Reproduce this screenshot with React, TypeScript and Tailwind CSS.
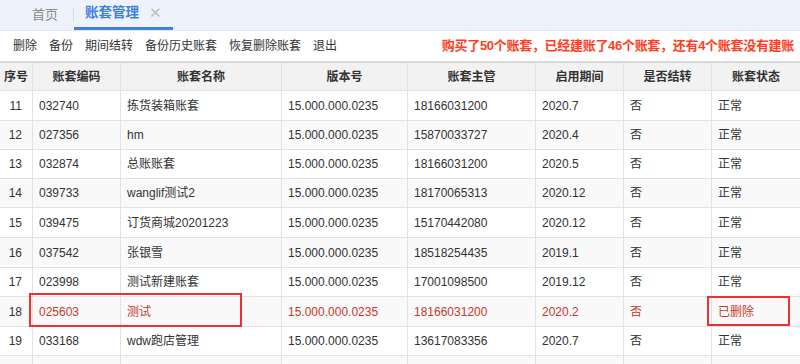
import React from 'react'

const rows = [
  { no: 11, code: '032740', name: '拣货装箱账套', ver: '15.000.000.0235', boss: '18166031200', period: '2020.7', carry: '否', status: '正常', h: 'h-[30px]' },
  { no: 12, code: '027356', name: 'hm', ver: '15.000.000.0235', boss: '15870033727', period: '2020.4', carry: '否', status: '正常', h: 'h-[29px]' },
  { no: 13, code: '032874', name: '总账账套', ver: '15.000.000.0235', boss: '18166031200', period: '2020.5', carry: '否', status: '正常', h: 'h-[29px]' },
  { no: 14, code: '039733', name: 'wanglif测试2', ver: '15.000.000.0235', boss: '18170065313', period: '2020.12', carry: '否', status: '正常', h: 'h-[29px]' },
  { no: 15, code: '039475', name: '订货商城20201223', ver: '15.000.000.0235', boss: '15170442080', period: '2020.12', carry: '否', status: '正常', h: 'h-[30px]' },
  { no: 16, code: '037542', name: '张银雪', ver: '15.000.000.0235', boss: '18518254435', period: '2019.1', carry: '否', status: '正常', h: 'h-[30px]' },
  { no: 17, code: '023998', name: '测试新建账套', ver: '15.000.000.0235', boss: '17001098500', period: '2019.12', carry: '否', status: '正常', h: 'h-[29px]' },
  { no: 18, code: '025603', name: '测试', ver: '15.000.000.0235', boss: '18166031200', period: '2020.2', carry: '否', status: '已删除', h: 'h-[30px]', deleted: true },
  { no: 19, code: '033168', name: 'wdw跑店管理', ver: '15.000.000.0235', boss: '13617083356', period: '2020.7', carry: '否', status: '正常', h: 'h-[29px]' },
]

const headers = ['序号', '账套编码', '账套名称', '版本号', '账套主管', '启用期间', '是否结转', '账套状态']
const cols = 'grid grid-cols-[33px_88px_161px_126px_128px_88px_88px_88px]'

const App = () => {
  return (
    <div className="w-[800px] h-[364px] overflow-hidden bg-white text-[#333] font-['Liberation_Sans','Noto_Sans_CJK_SC',sans-serif]">
      {/* tab bar */}
      <div className="h-[31px] bg-[#eef3fb] border-b border-[#e3e9f3] flex items-end">
        <div className="w-[73px] h-[30px] flex items-center justify-end pr-[15px] text-[13px] text-[#8a8a8a]">首页</div>
        <div className="w-px h-[14px] bg-[#d6dbe4] mb-[8px]"></div>
        <div className="w-[99px] h-[30px] flex items-center pl-[11px] gap-[10px] border-b-[3px] border-[#3f7fe3] text-[13.5px] font-bold text-[#3f7fe3]">
          <span>账套管理</span>
          <span className="text-[#b8bcc4] font-normal text-[15px]">✕</span>
        </div>
      </div>

      {/* toolbar */}
      <div className="h-[30px] flex items-center justify-between pl-[13px] pr-[6px] text-[12px]">
        <div className="flex gap-[12px]">
          <span>删除</span>
          <span>备份</span>
          <span>期间结转</span>
          <span>备份历史账套</span>
          <span>恢复删除账套</span>
          <span>退出</span>
        </div>
        <div className="text-[13px] font-bold text-[#ff3d1f] tracking-[-0.3px]">购买了50个账套，已经建账了46个账套，还有4个账套没有建账</div>
      </div>
      <div className="h-[2px] bg-[#d9d9d9]"></div>

      {/* table header */}
      <div className={`${cols} h-[28px] bg-[#f2f2f2] border-b border-[#e2e2e2] text-[12px] font-bold`}>
        {headers.map((h, i) => (
          <div key={h} className={`flex items-center justify-center ${i < 7 ? 'border-r border-[#e2e2e2]' : ''}`}>{h}</div>
        ))}
      </div>

      {/* table rows */}
      {rows.map((r) => {
        const color = r.deleted ? 'text-[#c8382d]' : ''
        const cells = [r.code, r.name, r.ver, r.boss, r.period, r.carry, r.status]
        return (
          <div key={r.no} className={`${cols} ${r.h} relative border-b border-[#e2e2e2] text-[12px] ${r.no % 2 === 0 ? 'bg-[#f9f9f9]' : 'bg-white'}`}>
            <div className="flex items-center justify-end pr-[10px] border-r border-[#e2e2e2]">{r.no}</div>
            {cells.map((c, i) => (
              <div key={i} className={`flex items-center pl-[6px] ${color} ${i < 6 ? 'border-r border-[#e2e2e2]' : ''}`}>{c}</div>
            ))}
            {r.deleted && (
              <>
                <div className="absolute left-[29px] top-[-4px] w-[213px] h-[34px] border-2 border-[#f0302f]"></div>
                <div className="absolute left-[707px] top-[-1px] w-[83px] h-[30px] border-2 border-[#f0302f]"></div>
              </>
            )}
          </div>
        )
      })}
      <div className={`${cols} h-[29px] bg-[#f9f9f9]`}>
        {headers.map((h, i) => (
          <div key={h} className={i < 7 ? 'border-r border-[#e2e2e2]' : ''}></div>
        ))}
      </div>
    </div>
  )
}

export default App
